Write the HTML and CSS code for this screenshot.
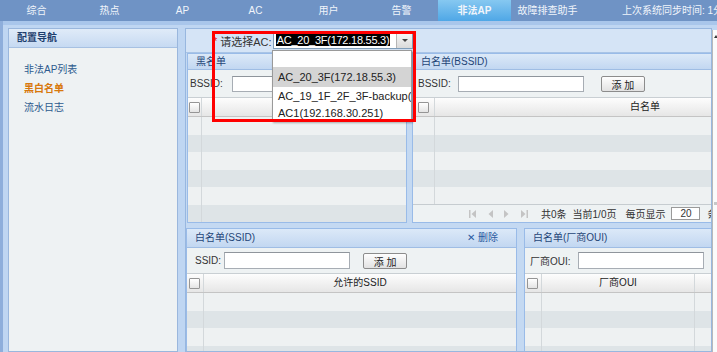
FILE: index.html
```html
<!DOCTYPE html>
<html lang="zh-CN">
<head>
    <meta charset="UTF-8">
    <title>非法AP - 黑白名单</title>
    <link rel="stylesheet" href="styles.css">
</head>
<body>

    <!-- Hauptnavigation -->
    <div class="topnav">
        <a class="nav-item">综合</a>
        <a class="nav-item">热点</a>
        <a class="nav-item">AP</a>
        <a class="nav-item">AC</a>
        <a class="nav-item">用户</a>
        <a class="nav-item">告警</a>
        <a class="nav-item active">非法AP</a>
        <a class="nav-item">故障排查助手</a>
        <span class="sync">上次系统同步时间: 1分钟前</span>
    </div>

    <div class="page">
        <!-- linke Navigation -->
        <aside class="sidebar">
            <div class="side-head">配置导航</div>
            <ul class="side-list">
                <li>非法AP列表</li>
                <li class="on">黑白名单</li>
                <li>流水日志</li>
            </ul>
        </aside>

        <div class="content">
            <div class="toolbar">
                <span class="req">*</span>
                <span class="toolbar-label">请选择AC:</span>
                <div class="select">
                    <span class="select-value">AC_20_3F(172.18.55.3)</span>
                    <span class="select-arrow"></span>
                </div>
            </div>

            <div class="row row-top">
                <!-- Schwarze Liste -->
                <section class="panel panel-black">
                    <div class="panel-head">黑名单</div>
                    <div class="panel-form">
                        <label>BSSID:</label>
                        <input type="text" class="text-input">
                        <button class="btn">添 加</button>
                    </div>
                    <div class="grid">
                        <div class="grid-head">
                            <span class="col-check"><i class="check"></i></span>
                            <span class="col-main">黑名单</span>
                        </div>
                        <div class="grid-body body-6">
                            <div class="grid-row"><span class="col-check"></span><span class="col-main"></span></div>
                            <div class="grid-row"><span class="col-check"></span><span class="col-main"></span></div>
                            <div class="grid-row"><span class="col-check"></span><span class="col-main"></span></div>
                            <div class="grid-row"><span class="col-check"></span><span class="col-main"></span></div>
                            <div class="grid-row"><span class="col-check"></span><span class="col-main"></span></div>
                            <div class="grid-row"><span class="col-check"></span><span class="col-main"></span></div>
                        </div>
                    </div>
                </section>

                <!-- Weisse Liste BSSID -->
                <section class="panel panel-bssid">
                    <div class="panel-head">白名单(BSSID)</div>
                    <div class="panel-form">
                        <label>BSSID:</label>
                        <input type="text" class="text-input">
                        <button class="btn">添 加</button>
                    </div>
                    <div class="grid">
                        <div class="grid-head">
                            <span class="col-check"><i class="check"></i></span>
                            <span class="col-main">白名单</span>
                        </div>
                        <div class="grid-body body-5">
                            <div class="grid-row"><span class="col-check"></span><span class="col-main"></span></div>
                            <div class="grid-row"><span class="col-check"></span><span class="col-main"></span></div>
                            <div class="grid-row"><span class="col-check"></span><span class="col-main"></span></div>
                            <div class="grid-row"><span class="col-check"></span><span class="col-main"></span></div>
                            <div class="grid-row"><span class="col-check"></span><span class="col-main"></span></div>
                        </div>
                        <div class="pager">
                            <svg class="pg-icon" width="10" height="10" viewBox="0 0 10 10"><rect x="1" y="1" width="1.5" height="8" fill="#c4c4c4"/><path d="M8 1 L3.5 5 L8 9 Z" fill="#c4c4c4"/></svg>
                            <svg class="pg-icon" width="7" height="10" viewBox="0 0 7 10"><path d="M6 1 L1.5 5 L6 9 Z" fill="#c4c4c4"/></svg>
                            <svg class="pg-icon" width="7" height="10" viewBox="0 0 7 10"><path d="M1 1 L5.5 5 L1 9 Z" fill="#c4c4c4"/></svg>
                            <svg class="pg-icon" width="10" height="10" viewBox="0 0 10 10"><path d="M2 1 L6.5 5 L2 9 Z" fill="#c4c4c4"/><rect x="7.5" y="1" width="1.5" height="8" fill="#c4c4c4"/></svg>
                            <span class="pg-text pg-total">共0条</span>
                            <span class="pg-text">当前1/0页</span>
                            <span class="pg-text pg-size">每页显示</span>
                            <span class="pg-input">20</span>
                            <span class="pg-text">条</span>
                        </div>
                    </div>
                </section>
            </div>

            <div class="row row-bottom">
                <!-- Weisse Liste SSID -->
                <section class="panel panel-ssid">
                    <div class="panel-head">
                        白名单(SSID)
                        <span class="head-action">✕ 删除</span>
                    </div>
                    <div class="panel-form form-ssid">
                        <label>SSID:</label>
                        <input type="text" class="text-input">
                        <button class="btn">添 加</button>
                    </div>
                    <div class="grid">
                        <div class="grid-head">
                            <span class="col-check"><i class="check"></i></span>
                            <span class="col-main">允许的SSID</span>
                        </div>
                        <div class="grid-body">
                            <div class="grid-row"><span class="col-check"></span><span class="col-main"></span></div>
                            <div class="grid-row"><span class="col-check"></span><span class="col-main"></span></div>
                            <div class="grid-row"><span class="col-check"></span><span class="col-main"></span></div>
                            <div class="grid-row"><span class="col-check"></span><span class="col-main"></span></div>
                        </div>
                    </div>
                </section>

                <!-- Weisse Liste Hersteller -->
                <section class="panel panel-oui">
                    <div class="panel-head">白名单(厂商OUI)</div>
                    <div class="panel-form">
                        <label>厂商OUI:</label>
                        <input type="text" class="text-input">
                    </div>
                    <div class="grid">
                        <div class="grid-head">
                            <span class="col-check"><i class="check"></i></span>
                            <span class="col-main">厂商OUI</span>
                            <span class="col-extra"></span>
                        </div>
                        <div class="grid-body">
                            <div class="grid-row"><span class="col-check"></span><span class="col-main"></span><span class="col-extra"></span></div>
                            <div class="grid-row"><span class="col-check"></span><span class="col-main"></span><span class="col-extra"></span></div>
                            <div class="grid-row"><span class="col-check"></span><span class="col-main"></span><span class="col-extra"></span></div>
                            <div class="grid-row"><span class="col-check"></span><span class="col-main"></span><span class="col-extra"></span></div>
                        </div>
                    </div>
                </section>
            </div>
        </div>

        <div class="vscroll"><span class="vscroll-up"></span><span class="vscroll-thumb"></span></div>
    </div>

    <!-- geoeffnete AC-Auswahl -->
    <div class="ac-menu">
        <div class="ac-opt ac-empty"></div>
        <div class="ac-opt selected">AC_20_3F(172.18.55.3)</div>
        <div class="ac-opt">AC_19_1F_2F_3F-backup(</div>
        <div class="ac-opt ac-last">AC1(192.168.30.251)</div>
    </div>
    <div class="mark"></div>

</body>
</html>
```

FILE: styles.css
```css
* {
    box-sizing: border-box;
}
body {
    margin: 0;
    width: 717px;
    height: 352px;
    overflow: hidden;
    font-family: "Liberation Sans", "Noto Sans CJK SC", sans-serif;
    font-size: 10px;
    color: #222;
    background-color: #bfd6f2;
}

/* Hauptnavigation */
.topnav {
    display: flex;
    height: 21px;
    background-color: #6f93c5;
    color: #f1f5fb;
    white-space: nowrap;
    overflow: hidden;
}
.nav-item {
    width: 73px;
    flex-shrink: 0;
    text-align: center;
    line-height: 21px;
}
.nav-item.active {
    background: linear-gradient(#86c8f1, #4fa7e6);
    font-weight: bold;
}
.sync {
    margin-left: 38px;
    line-height: 21px;
}

.page {
    display: flex;
    height: 331px;
    padding-top: 7px;
    border-left: 3px solid #8eaedb;
    background: linear-gradient(#a9c6eb 0, #a9c6eb 4px, #bfd6f2 4px);
}

/* linke Navigation */
.sidebar {
    width: 170px;
    flex-shrink: 0;
    margin-left: 5px;
    border: 1px solid #9ab7dd;
    background-color: #eef2f3;
}
.side-head {
    height: 19px;
    line-height: 18px;
    padding-left: 8px;
    background: linear-gradient(#e0ebf8, #c6daf2);
    border-bottom: 1px solid #a7c1e2;
    color: #1d3e6d;
    font-weight: bold;
}
.side-list {
    list-style-type: none;
    margin: 0;
    padding: 12px 0 0 15px;
}
.side-list li {
    line-height: 19px;
    color: #2c5a8e;
}
.side-list li.on {
    color: #d8780c;
    font-weight: bold;
}

/* Inhaltsbereich */
.content {
    width: 527px;
    flex-shrink: 0;
    margin-left: 7px;
    border: 1px solid #98b7df;
    background-color: #c4d9f2;
    overflow: hidden;
}
.toolbar {
    display: flex;
    align-items: center;
    height: 24px;
    padding-left: 27px;
    background-color: #d5e4f6;
    border-bottom: 1px solid #a9c4e6;
    font-size: 11px;
    color: #333;
}
.req {
    color: #e02020;
    margin-right: 3px;
}
.select {
    display: flex;
    width: 140px;
    height: 17px;
    margin-left: 1px;
    border: 1px solid #7f9db9;
    background-color: #fff;
}
.select-value {
    height: 12px;
    margin: 1px 0 0 2px;
    padding: 0 1px;
    background-color: #000;
    color: #fff;
    font-size: 11px;
    line-height: 12px;
    letter-spacing: -0.25px;
    white-space: nowrap;
}
.select-arrow {
    position: relative;
    width: 16px;
    flex-shrink: 0;
    margin-left: auto;
    background: linear-gradient(#f7f7f7, #dadada);
    border-left: 1px solid #b5b5b5;
}
.select-arrow::after {
    content: "";
    position: absolute;
    left: 5px;
    top: 6px;
    border-left: 3px solid transparent;
    border-right: 3px solid transparent;
    border-top: 3px solid #444;
}

.row {
    display: flex;
}
.row-top {
    gap: 5px;
    height: 170px;
    padding-left: 1px;
}
.row-bottom {
    gap: 7px;
    margin-top: 5px;
}

/* Panels */
.panel {
    flex-shrink: 0;
    border: 1px solid #99bbe8;
    background-color: #eef2f3;
    overflow: hidden;
}
.panel-black {
    width: 220px;
}
.panel-bssid {
    width: 444px;
}
.panel-ssid {
    width: 331px;
    height: 140px;
}
.panel-oui {
    width: 300px;
    height: 140px;
}
.panel-head {
    display: flex;
    height: 16px;
    line-height: 15px;
    padding-left: 8px;
    padding-right: 18px;
    background: linear-gradient(#dce9f8, #c2d7f1);
    border-bottom: 1px solid #9fbde4;
    color: #1f4577;
    white-space: nowrap;
}
.row-bottom .panel-head {
    height: 19px;
    line-height: 18px;
}
.head-action {
    margin-left: auto;
    color: #2a5aa0;
}
.panel-form {
    display: flex;
    align-items: center;
    gap: 7px;
    height: 27px;
    padding-left: 5px;
    white-space: nowrap;
}
.panel-black .panel-form {
    padding-left: 2px;
    gap: 9px;
}
.row-bottom .panel-form {
    height: 25px;
}
.form-ssid {
    padding-left: 8px;
    gap: 3px;
}
.panel-form label {
    color: #333;
}
.text-input {
    width: 126px;
    height: 16px;
    margin: 0;
    border: 1px solid #a7adb4;
    border-top-color: #8f959c;
    background-color: #fff;
}
.row-bottom .text-input {
    height: 17px;
}
.btn {
    width: 44px;
    height: 16px;
    margin: 0 0 0 10px;
    padding: 0;
    border: 1px solid #8c8c8c;
    border-radius: 2px;
    background: linear-gradient(#fefefe, #e2e2e2);
    font-family: inherit;
    font-size: 10px;
    color: #222;
    flex-shrink: 0;
}

/* Tabellen */
.grid-head {
    display: flex;
    height: 20px;
    border-top: 1px solid #c9cfd3;
    border-bottom: 1px solid #c4c4c4;
    background: linear-gradient(#fdfdfd, #e6e6e6);
    line-height: 18px;
}
.col-check {
    display: flex;
    align-items: center;
    width: 17px;
    flex-shrink: 0;
    padding-left: 2px;
    border-right: 1px solid #d3d8db;
}
.panel-bssid .col-check {
    width: 22px;
    padding-left: 5px;
}
.panel-black .col-check {
    width: 14px;
    padding-left: 1px;
}
.col-main {
    flex: 1;
    text-align: center;
    color: #222;
}
.panel-bssid .col-main {
    flex: none;
    width: 420px;
}
.panel-oui .col-main {
    flex: none;
    width: 153px;
    border-right: 1px solid #d3d8db;
}
.col-extra {
    flex: 1;
}
.check {
    display: block;
    width: 11px;
    height: 11px;
    border: 1px solid #959595;
    border-radius: 1px;
    background: linear-gradient(#ffffff, #e4e4e4);
}
.grid-body {
    overflow: hidden;
}
.body-6 {
    height: 105px;
}
.body-5 {
    height: 87px;
}
.grid-row {
    display: flex;
    height: 17.5px;
    background-color: #eef1f2;
}
.grid-row:nth-child(even) {
    background-color: #dee4e7;
}

/* Seitennavigation */
.pager {
    display: flex;
    align-items: center;
    height: 18px;
    padding-left: 55px;
    border-top: 1px solid #c6ccd0;
    white-space: nowrap;
    color: #333;
}
.pg-icon {
    margin-right: 9px;
    flex-shrink: 0;
}
.pg-total {
    margin-left: 3px;
}
.pg-text {
    margin-right: 6px;
}
.pg-size {
    margin-left: 3px;
}
.pg-input {
    width: 29px;
    height: 13px;
    margin-right: 7px;
    border: 1px solid #9a9a9a;
    background-color: #fff;
    text-align: center;
    line-height: 11px;
}

/* Scrollleiste rechts */
.vscroll {
    position: relative;
    width: 5px;
    flex-shrink: 0;
    margin-top: 2px;
    border-left: 1px solid #b9b9b9;
    background-color: #fbfbfb;
}
.vscroll-up {
    position: absolute;
    left: 1px;
    top: 5px;
    border-left: 2px solid transparent;
    border-right: 2px solid transparent;
    border-bottom: 3px solid #333;
}
.vscroll-thumb {
    position: absolute;
    left: 1px;
    top: 172px;
    width: 3px;
    height: 3px;
    background-color: #c8c8c8;
}

/* geoeffnetes Auswahlmenue */
.ac-menu {
    position: absolute;
    left: 272px;
    top: 50px;
    width: 140px;
    height: 72px;
    overflow: hidden;
    background-color: #fff;
    border: 1px solid #9a9a9a;
    box-shadow: 1px 1px 2px rgba(0, 0, 0, 0.3);
    font-size: 11px;
    color: #222;
}
.ac-opt {
    height: 19px;
    line-height: 19px;
    padding-left: 5px;
    white-space: nowrap;
}
.ac-empty {
    height: 16px;
}
.ac-opt.selected {
    height: 20px;
    line-height: 20px;
    background-color: #d4d4d4;
}
.ac-opt.ac-last {
    line-height: 15px;
}
.mark {
    position: absolute;
    left: 212px;
    top: 31px;
    width: 204px;
    height: 91px;
    border: 3px solid #ff0000;
    pointer-events: none;
}
```
